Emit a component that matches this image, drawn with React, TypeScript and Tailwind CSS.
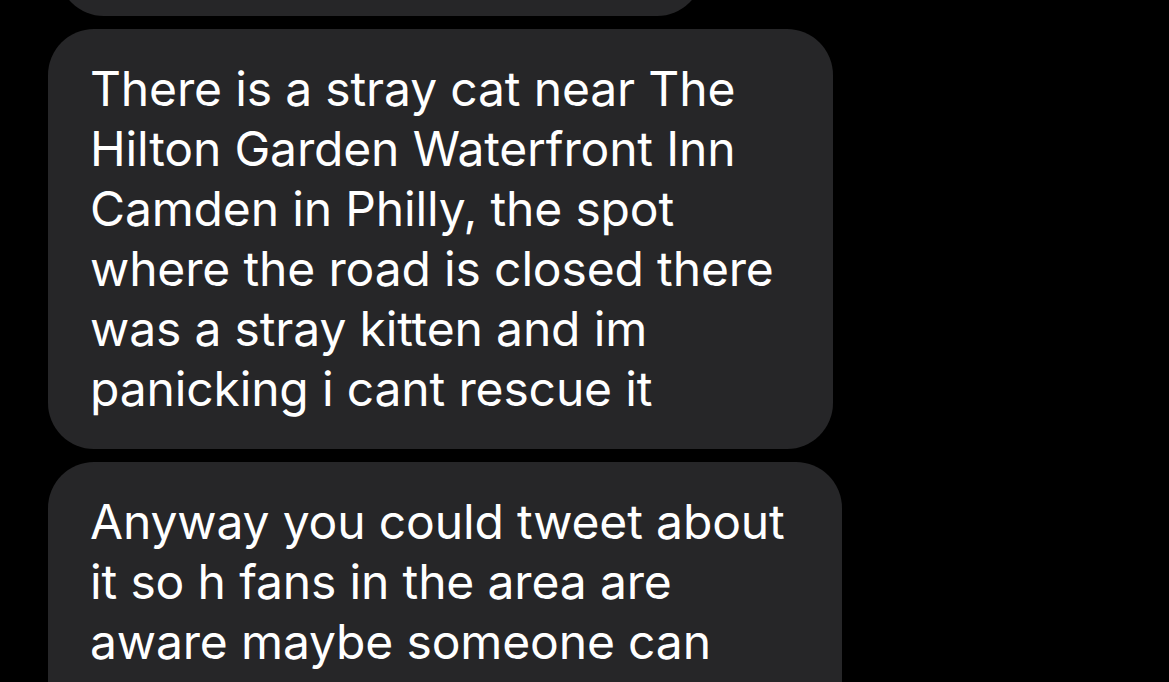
export default function App() {
  const bubble =
    "bg-[#262628] text-white rounded-[46px] text-[48px] leading-[60px] tracking-[-0.15px]";

  return (
    <div
      className="w-[1169px] h-[682px] overflow-hidden bg-black"
      style={{ fontFamily: "Inter, 'Noto Sans', sans-serif" }}
    >
      <div className="flex flex-col gap-[13px]">
        {/* tail end of the previous message */}
        <div className="ml-[58px] mt-[-80px] w-[645px] h-[96px] bg-[#262628] rounded-[46px]" />

        <div className={`${bubble} ml-[48px] w-[785px] pl-[42px] pr-[20px] pt-[30px] pb-[30px]`}>
          There is a stray cat near The
          <br />
          Hilton Garden Waterfront Inn
          <br />
          Camden in Philly, the spot
          <br />
          where the road is closed there
          <br />
          was a stray kitten and im
          <br />
          panicking i cant rescue it
        </div>

        <div className={`${bubble} ml-[48px] w-[794px] pl-[42px] pr-[20px] pt-[30px] pb-[90px]`}>
          Anyway you could tweet about
          <br />
          it so h fans in the area are
          <br />
          aware maybe someone can
        </div>
      </div>
    </div>
  );
}
